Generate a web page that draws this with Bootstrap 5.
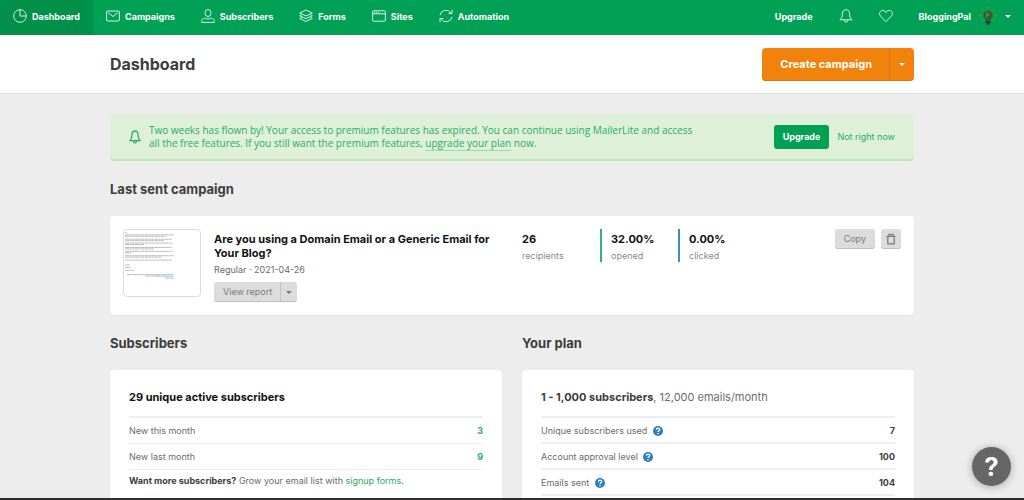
<!DOCTYPE html>
<html lang="en">
<head>
<meta charset="utf-8">
<meta name="viewport" content="width=device-width, initial-scale=1">
<title>Dashboard</title>
<link href="https://cdn.jsdelivr.net/npm/bootstrap@5.3.0/dist/css/bootstrap.min.css" rel="stylesheet">
<style>
:root { --brand: #00a154; --brand-dark: #009049; --ink: #3c3c3c; --soft: #6b6b6b; }
body { font-family: Inter, "Liberation Sans", sans-serif; font-size: 9px; line-height: 13px; color: var(--soft); background: #ededed; }
svg { fill: none; stroke: currentColor; stroke-width: 1; flex: none; }
.btn { --bs-btn-font-size: 9px; --bs-btn-line-height: 14px; --bs-btn-border-radius: 3px; --bs-btn-border-width: 0; }
.page-width { max-width: 804px; }

.topbar { background: var(--brand); --bs-navbar-padding-y: 0; height: 35px; }
.topbar .navbar-nav .nav-link { display: flex; align-items: center; gap: 5px; height: 35px; padding: 0 13px 3px; color: #fff; font-weight: 700; }
.topbar .nav-link svg { width: 14px; height: 14px; opacity: .85; }
.topbar .navbar-nav .nav-link.active { background: var(--brand-dark); color: #fff; }
.topbar .navbar-nav .nav-link.account { gap: 8px; }
.topbar .account svg { opacity: 1; width: 18px; height: 18px; }
.tri { width: 0; height: 0; border: 3px solid transparent; border-top-color: currentColor; border-bottom: 0; }

.title-bar { background: #fff; border-bottom: 1px solid #dedede; height: 59px; }
.title-bar h1 { font-size: 16px; line-height: 24px; font-weight: 700; color: var(--ink); }
.btn-create { --bs-btn-color: #fff; --bs-btn-bg: #f1830d; --bs-btn-hover-bg: #e0770a; --bs-btn-hover-color: #fff; --bs-btn-font-size: 11px; --bs-btn-font-weight: 700; --bs-btn-padding-x: 18px; height: 33px; border-radius: 4px; box-shadow: inset 0 -1px #d8740a; }
.btn-create.toggle { --bs-btn-padding-x: 9px; border-left: 1px solid #d8740a; }

.notice { background: #def0d8; border-bottom: 2px solid #bfe8ac; border-radius: 4px; color: #26ad68; min-height: 47px; margin-top: 20px; padding: 0 19px; }
.notice p { max-width: 550px; font-family: "Open Sans", "Liberation Sans", sans-serif; font-size: 10px; }
.notice p a { display: inline-block; color: inherit; text-decoration: underline; text-decoration-color: #9bd9b0; text-underline-offset: 3px; }
.notice .dismiss { color: #26ad68; text-decoration: none; }
.btn-brand { --bs-btn-color: #fff; --bs-btn-bg: var(--brand); --bs-btn-hover-bg: var(--brand-dark); --bs-btn-hover-color: #fff; --bs-btn-font-weight: 700; --bs-btn-padding-x: 9px; height: 24px; }

.section-title { font-size: 13px; line-height: 20px; font-weight: 700; color: var(--ink); margin: 18px 0 17px; }
.panel { background: #fff; border-radius: 4px; box-shadow: 0 1px 1px #e2e2e2; }
.campaign { padding: 13px; min-height: 99px; }
.campaign h3 { font-size: 11px; line-height: 14px; font-weight: 700; color: #111; margin: 3px 0; }
.thumb { width: 78px; height: 68px; border: 1px solid #dcdcdc; border-radius: 4px; color: #888; }
.thumb .url { stroke: #3d8fe8; }
.summary { width: 321px; padding: 0 24px 0 13px; }
.summary .btn-group { margin-top: 6px; }
.btn-soft { --bs-btn-color: #7b7b7b; --bs-btn-bg: #dcdcdc; --bs-btn-hover-bg: #d0d0d0; --bs-btn-hover-color: #555; --bs-btn-padding-x: 9px; height: 20px; box-shadow: inset 0 -1px #bebebe; }
.btn-soft.toggle { --bs-btn-padding-x: 5px; border-left: 1px solid #c4c4c4; }
.btn-soft.square { --bs-btn-padding-x: 4px; }
.figure-box { width: 78px; height: 33px; color: #8a8a8a; }
.figure-box.opened, .figure-box.clicked { padding-left: 9px; border-left: 2px solid #31b573; }
.figure-box.clicked { border-color: #3a8fc8; }
.figure-box strong { font-size: 11px; line-height: 20px; color: #111; }
.actions { gap: 6px; }

.columns { --bs-gutter-x: 20px; }
.stats { padding: 17px 19px 24px; }
.stats h3 { font-size: 11px; line-height: 20px; margin: 0 0 9px; font-weight: 700; color: #111; }
.stats h3.plan { color: var(--ink); }
.stats h3.plan span { font-weight: 400; color: var(--soft); }
.stats table { width: 100%; border-top: 2px solid #eceef3; }
.stats td, .stats th { height: 26px; padding: 0; font-weight: 400; border-bottom: 2px solid #eceef3; }
.stats tr td { text-align: right; font-weight: 700; color: var(--ink); }
.stats .gains td, .stats .gains th { border-bottom-width: 1px; }
.stats .gains td { color: #1fae63; }
.stats p { margin: 4px 0 8px; }
.stats b { color: var(--ink); }
.stats a { color: #26ad68; text-decoration: none; }
.help { width: 10px; height: 10px; margin-left: 3px; vertical-align: -2px; }
.help-fab { width: 39px; height: 39px; right: 13px; bottom: 14px; background: #666; color: #fff; border: 0; box-shadow: 0 1px 8px rgba(0,0,0,.3); font-size: 26px; line-height: 39px; font-weight: 700; padding: 0; z-index: 1040; }
.taskbar { height: 2px; background: #2d2d2d; }
</style>
</head>
<body class="vh-100 overflow-hidden">
<nav class="navbar navbar-expand topbar" aria-label="Main">
  <ul class="navbar-nav">
    <li><a class="nav-link active" href="#" aria-current="page"><svg viewBox="0 0 14 14"><circle cx="7" cy="7" r="6.3"/><path d="M7 .7V7h6.3"/></svg>Dashboard</a></li>
    <li><a class="nav-link" href="#"><svg viewBox="0 0 14 14"><rect x=".6" y="2" width="12.8" height="10" rx="1"/><path d="M2 3.5l5 4 5-4"/></svg>Campaigns</a></li>
    <li><a class="nav-link" href="#"><svg viewBox="0 0 14 14"><ellipse cx="7" cy="4" rx="3" ry="3.5"/><path d="M.6 13.4c0-3 .5-3.6 3.900-4.200 1 1 4 1 5 0 3.400.6 3.900 1.200 3.900 4.200z"/></svg>Subscribers</a></li>
    <li><a class="nav-link" href="#"><svg viewBox="0 0 14 14"><path d="M7 1l6.300 3L7 7 .7 4zM2.700 5.800L.7 6.700 7 9.700l6.300-3-2-.9M2.700 8.500l-2 .9L7 12.500l6.300-3.100-2-.9"/></svg>Forms</a></li>
    <li><a class="nav-link" href="#"><svg viewBox="0 0 14 14"><rect x=".6" y="1.800" width="12.800" height="10.400" rx="1"/><path d="M.6 4.800h12.800M2 3.400h1M4 3.400h1M6 3.400h1"/></svg>Sites</a></li>
    <li><a class="nav-link" href="#"><svg viewBox="0 0 14 14"><path d="M1 6.200A6 6 0 0 1 12 4M13 .8V4.500H9.500M13 7.800A6 6 0 0 1 2 10M1 13.200V9.500h3.500"/></svg>Automation</a></li>
  </ul>
  <ul class="navbar-nav ms-auto">
    <li><a class="nav-link" href="#">Upgrade</a></li>
    <li><a class="nav-link" href="#" aria-label="Notifications"><svg viewBox="0 0 14 14"><path d="M7 .7C4.500.7 3.300 2.500 3.300 5c0 3-.5 4-2.300 5.800h12C11.200 9 10.700 8 10.700 5 10.700 2.500 9.500.7 7 .7zM5.200 11c0 3 3.600 3 3.600 0"/></svg></a></li>
    <li><a class="nav-link" href="#" aria-label="Favourites"><svg viewBox="0 0 14 14"><path d="M7 12.600L1.600 7.100C-.8 4.500 1.300 1.400 3.800 1.400 5.400 1.400 6.500 2.400 7 3.600 7.500 2.400 8.600 1.400 10.200 1.400c2.500 0 4.600 3.100 2.200 5.700z"/></svg></a></li>
    <li><a class="nav-link account" href="#">BloggingPal
      <svg viewBox="0 0 18 18"><path stroke="#8f8526" d="M9 0v2M3 2.500l1.500 1.600M15 2.500l-1.500 1.600M0 8.500h2.500M15.500 8.500H18M2.500 14L4 12.700M15.500 14L14 12.700"/><path d="M9 3.500a4.800 4.800 0 0 0-2.700 8.700V14h5.400v-1.800A4.800 4.800 0 0 0 9 3.500z" fill="#17663a" stroke="#3c7a2c"/><path stroke="#b06a2c" d="M7.500 6.300h2.200l1 1-1 1.200H7.500zM7.500 6v5"/><path stroke="#263b30" stroke-width="2" d="M6.500 15h5M7.500 16.500h3"/></svg>
      <span class="tri"></span></a></li>
  </ul>
</nav>

<header class="title-bar d-flex align-items-center">
  <div class="page-width w-100 mx-auto d-flex justify-content-between align-items-center">
    <h1 class="m-0">Dashboard</h1>
    <div class="btn-group">
      <button type="button" class="btn btn-create py-0">Create campaign</button>
      <button type="button" class="btn btn-create toggle py-0" aria-label="More create options"><span class="tri d-block"></span></button>
    </div>
  </div>
</header>

<main class="page-width mx-auto">
  <section class="notice d-flex align-items-center">
    <svg width="12" height="14" viewBox="0 0 12 14" class="me-2"><path stroke-width="1.300" d="M6 1C4 1 3 2.500 3 4.800 3 7.600 2.600 8.800 1 10.600h10C9.400 8.800 9 7.600 9 4.800 9 2.500 8 1 6 1zM4.600 11c0 2.400 2.800 2.400 2.800 0"/></svg>
    <p class="m-0">Two weeks has flown by! Your access to premium features has expired. You can continue using MailerLite and access all the free features. If you still want the premium features, <a href="#">upgrade your plan</a> now.</p>
    <div class="ms-auto d-flex align-items-center gap-2">
      <button type="button" class="btn btn-brand py-0">Upgrade</button>
      <a class="dismiss" href="#">Not right now</a>
    </div>
  </section>

  <h2 class="section-title">Last sent campaign</h2>
  <section class="panel campaign d-flex align-items-start">
    <svg class="thumb" viewBox="0 0 78 68" aria-label="Email preview"><g stroke-width=".6" stroke-dasharray="4 .4 2 .3 3 .4"><path d="M1 2.500h2M1 5h50M1 6.500h42M1 9.500h48M1 11h40M1 13.500h49M1 15h20M1 18h48M1 19.500h30M1 22h49M1 23.500h7M1 26.500h50M1 28h38M1 31h38M1 36h5M1 38.500h6M1 41.500h9M3 46h48M22 47.500h12"/><path class="url" d="M39 31h10M33 47.500h18M42 49.500h9"/></g></svg>
    <div class="summary">
      <h3>Are you using a Domain Email or a Generic Email for Your Blog?</h3>
      <div>Regular · 2021-04-26</div>
      <div class="btn-group">
        <button type="button" class="btn btn-soft py-0">View report</button>
        <button type="button" class="btn btn-soft toggle py-0" aria-label="More report options"><span class="tri d-block"></span></button>
      </div>
    </div>
    <div class="figure-box d-flex flex-column"><strong>26</strong><span>recipients</span></div>
    <div class="figure-box opened d-flex flex-column"><strong>32.00%</strong><span>opened</span></div>
    <div class="figure-box clicked d-flex flex-column"><strong>0.00%</strong><span>clicked</span></div>
    <div class="actions ms-auto d-flex">
      <button type="button" class="btn btn-soft py-0">Copy</button>
      <button type="button" class="btn btn-soft square py-0 d-flex align-items-center" aria-label="Delete"><svg width="12" height="12" viewBox="0 0 12 12"><path stroke-width="1.300" d="M1.500 3.300h9M4 3V1.400h4V3M2.800 3.300v7.500h6.400V3.300"/></svg></button>
    </div>
  </section>

  <div class="row columns">
    <section class="col">
      <h2 class="section-title">Subscribers</h2>
      <div class="panel stats">
        <h3>29 unique active subscribers</h3>
        <table class="gains">
          <tr><th scope="row">New this month</th><td>3</td></tr>
          <tr><th scope="row">New last month</th><td>9</td></tr>
        </table>
        <p><b>Want more subscribers?</b> Grow your email list with <a href="#">signup forms</a>.</p>
      </div>
    </section>
    <section class="col">
      <h2 class="section-title">Your plan</h2>
      <div class="panel stats">
        <h3 class="plan">1 - 1,000 subscribers<span>, 12,000 emails/month</span></h3>
        <table>
          <tr><th scope="row">Unique subscribers used <svg class="help" viewBox="0 0 10 10"><circle cx="5" cy="5" r="5" fill="#2a80be" stroke="none"/><path stroke="#fff" stroke-width="1.300" d="M3.400 3.800C3.400 1.700 6.700 1.700 6.700 3.700 6.700 4.800 5 4.800 5 6.100M5 7v1.200"/></svg></th><td>7</td></tr>
          <tr><th scope="row">Account approval level <svg class="help" viewBox="0 0 10 10"><circle cx="5" cy="5" r="5" fill="#2a80be" stroke="none"/><path stroke="#fff" stroke-width="1.300" d="M3.400 3.800C3.400 1.700 6.700 1.700 6.700 3.700 6.700 4.800 5 4.800 5 6.100M5 7v1.200"/></svg></th><td>100</td></tr>
          <tr><th scope="row">Emails sent <svg class="help" viewBox="0 0 10 10"><circle cx="5" cy="5" r="5" fill="#2a80be" stroke="none"/><path stroke="#fff" stroke-width="1.300" d="M3.400 3.800C3.400 1.700 6.700 1.700 6.700 3.700 6.700 4.800 5 4.800 5 6.100M5 7v1.200"/></svg></th><td>104</td></tr>
        </table>
      </div>
    </section>
  </div>
</main>

<button type="button" class="help-fab rounded-circle position-fixed" aria-label="Help">?</button>
<div class="taskbar fixed-bottom"></div>
<script src="https://cdn.jsdelivr.net/npm/bootstrap@5.3.0/dist/js/bootstrap.bundle.min.js"></script>
</body>
</html>
